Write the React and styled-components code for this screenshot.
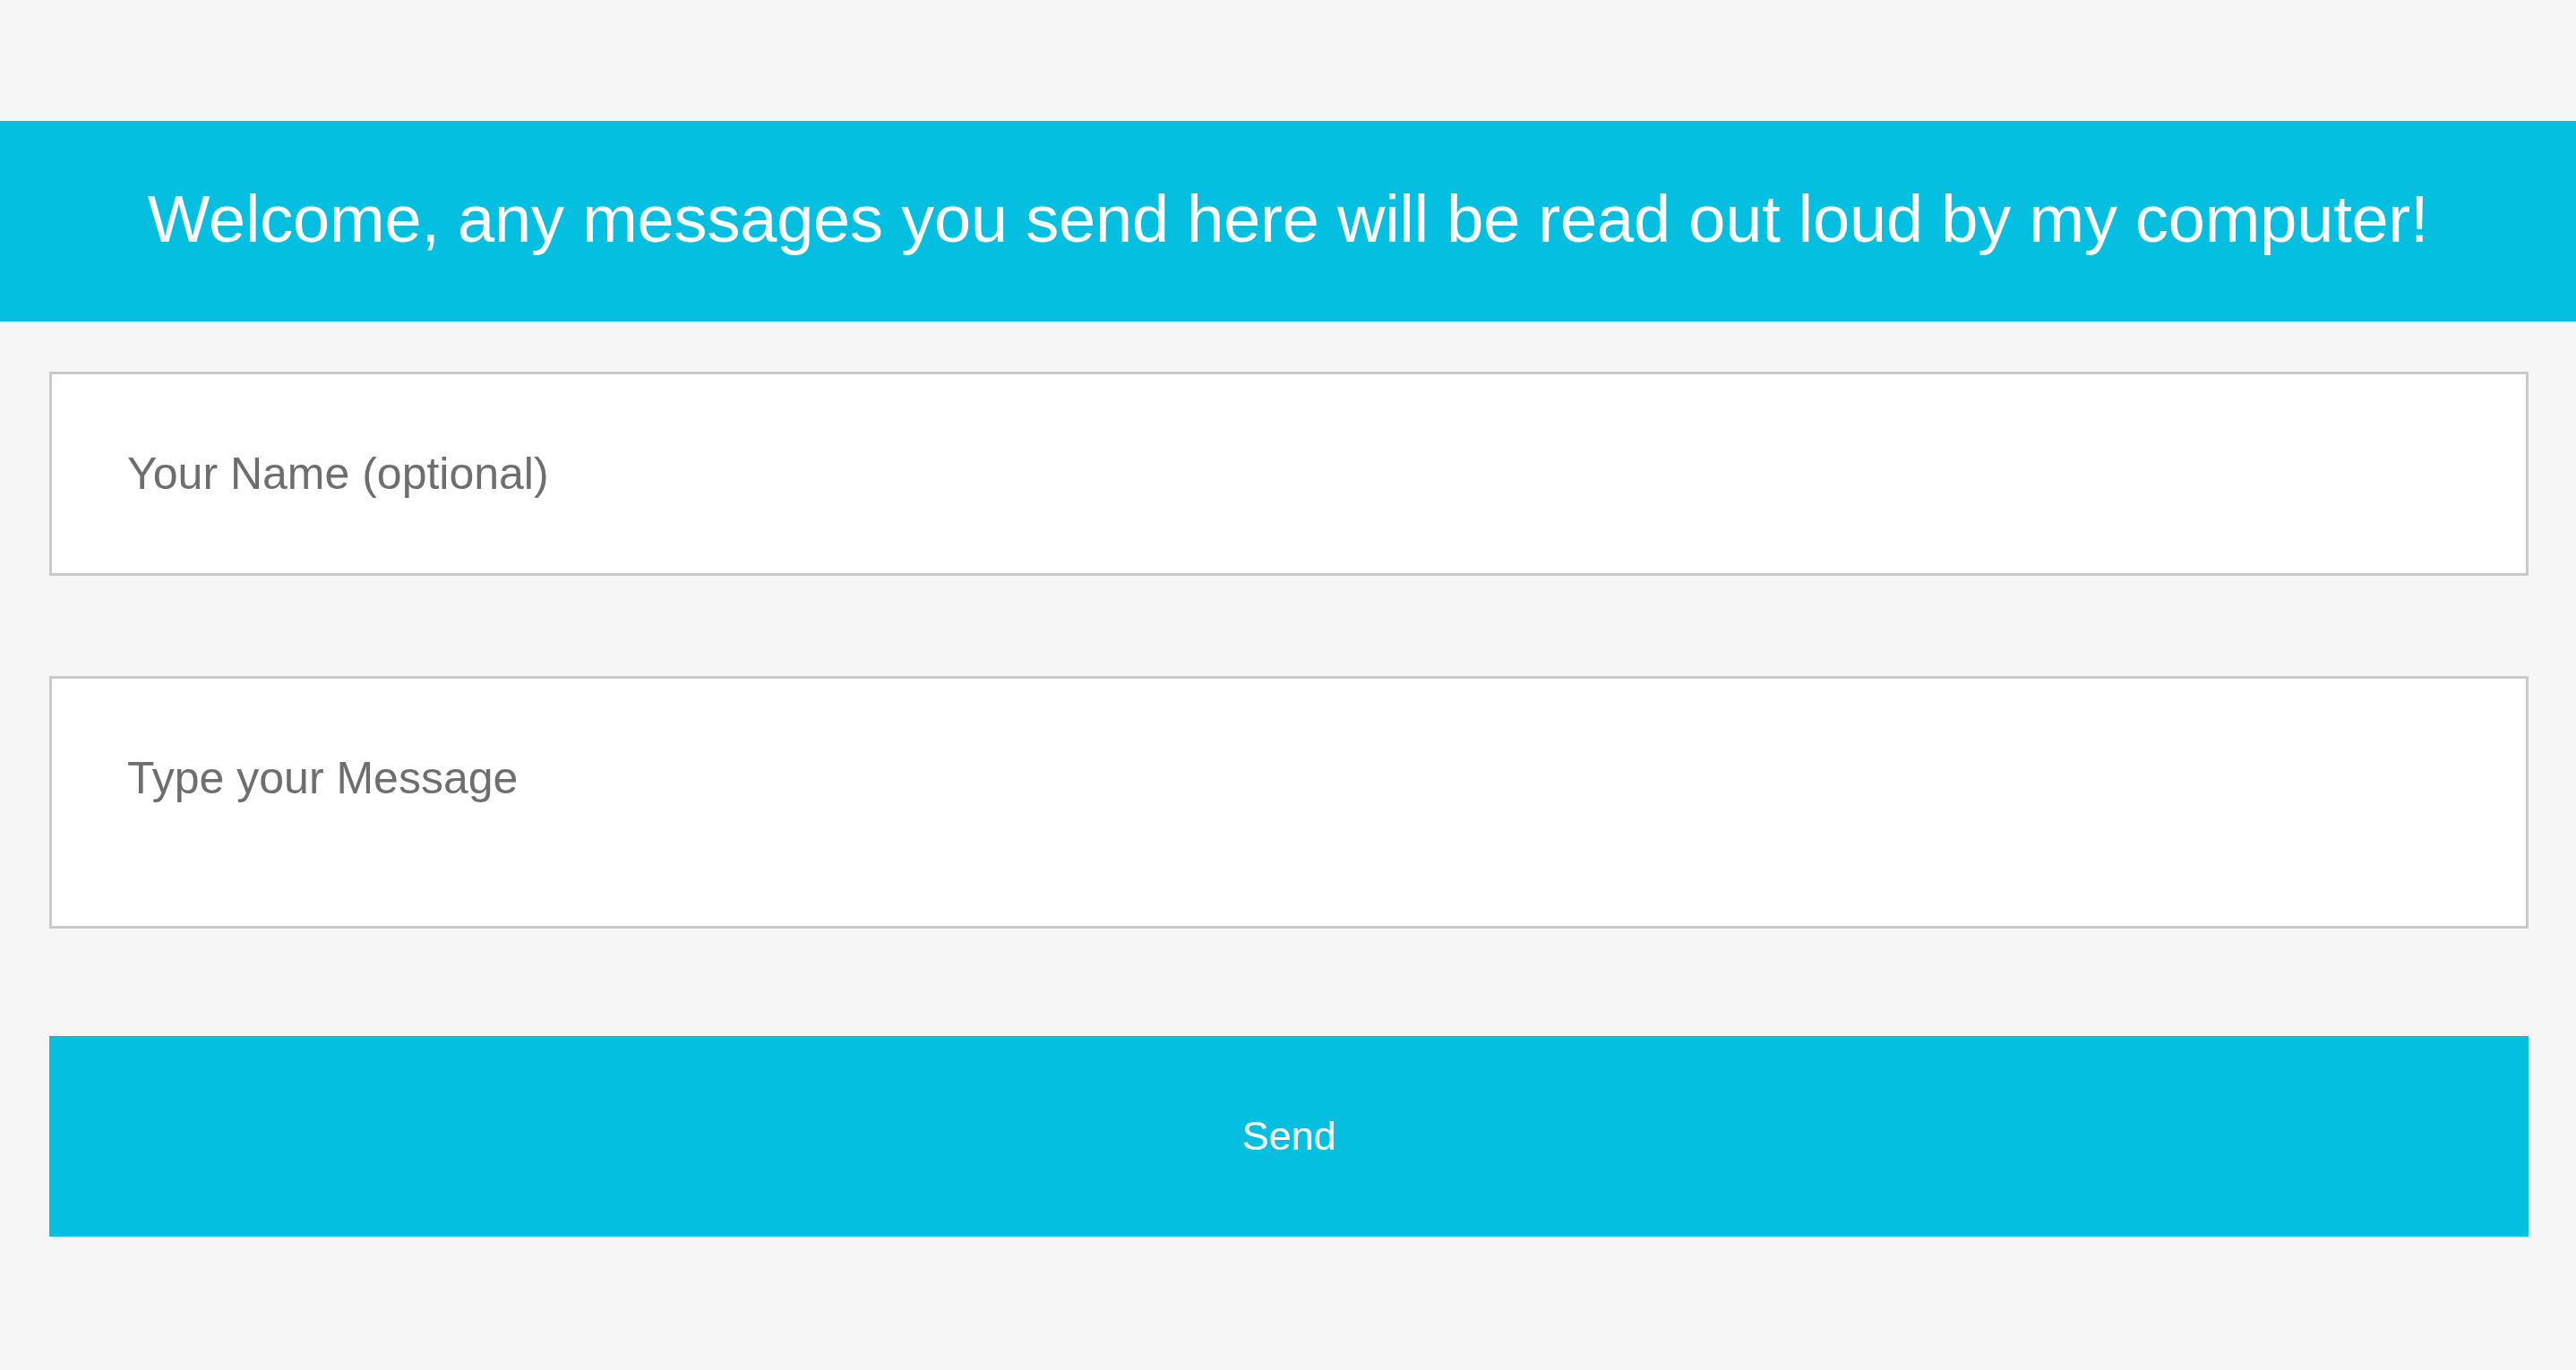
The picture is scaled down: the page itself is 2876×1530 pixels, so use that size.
import React from 'react';
import styled, { createGlobalStyle } from 'styled-components';

const GlobalStyle = createGlobalStyle`
    html, body {
        margin: 0;
        padding: 0;
        background: #f6f6f6;
        font-family: "Liberation Sans", Arial, sans-serif;
    }
    * {
        box-sizing: border-box;
    }
`;

const Page = styled.div`
    min-height: 1530px;
    padding-top: 135px;
    background: #f6f6f6;
`;

const Banner = styled.header`
    height: 224px;
    display: flex;
    align-items: center;
    justify-content: center;
    padding-bottom: 6px;
    background-color: #04bfdf;
    color: white;
`;

const Title = styled.h1`
    margin: 0;
    font-size: 74px;
    font-weight: normal;
    letter-spacing: -0.2px;
`;

const Form = styled.form`
    display: flex;
    flex-direction: column;
    padding: 56px 53px 0 55px;
`;

const Field = styled.input`
    height: 228px;
    width: 100%;
    padding: 0 84px;
    border: 3px solid #c9c9c9;
    background: white;
    font-family: inherit;
    font-size: 50px;
    color: #333;
    outline: none;
    &::placeholder {
        color: #6e6e6e;
    }
`;

const Message = styled.textarea`
    height: 282px;
    width: 100%;
    margin-top: 112px;
    padding: 82px 84px;
    border: 3px solid #c9c9c9;
    background: white;
    font-family: inherit;
    font-size: 50px;
    color: #333;
    resize: none;
    outline: none;
    &::placeholder {
        color: #6e6e6e;
    }
`;

const SendButton = styled.button`
    height: 224px;
    width: 100%;
    margin-top: 120px;
    border: none;
    background-color: #04bfdf;
    color: white;
    font-family: inherit;
    font-size: 45px;
    cursor: pointer;
`;

export default function App() {
    return (
        <Page>
            <GlobalStyle />
            <Banner>
                <Title>Welcome, any messages you send here will be read out loud by my computer!</Title>
            </Banner>
            <Form onSubmit={e => e.preventDefault()}>
                <Field type="text" placeholder="Your Name (optional)" />
                <Message placeholder="Type your Message" />
                <SendButton type="submit">Send</SendButton>
            </Form>
        </Page>
    );
}
